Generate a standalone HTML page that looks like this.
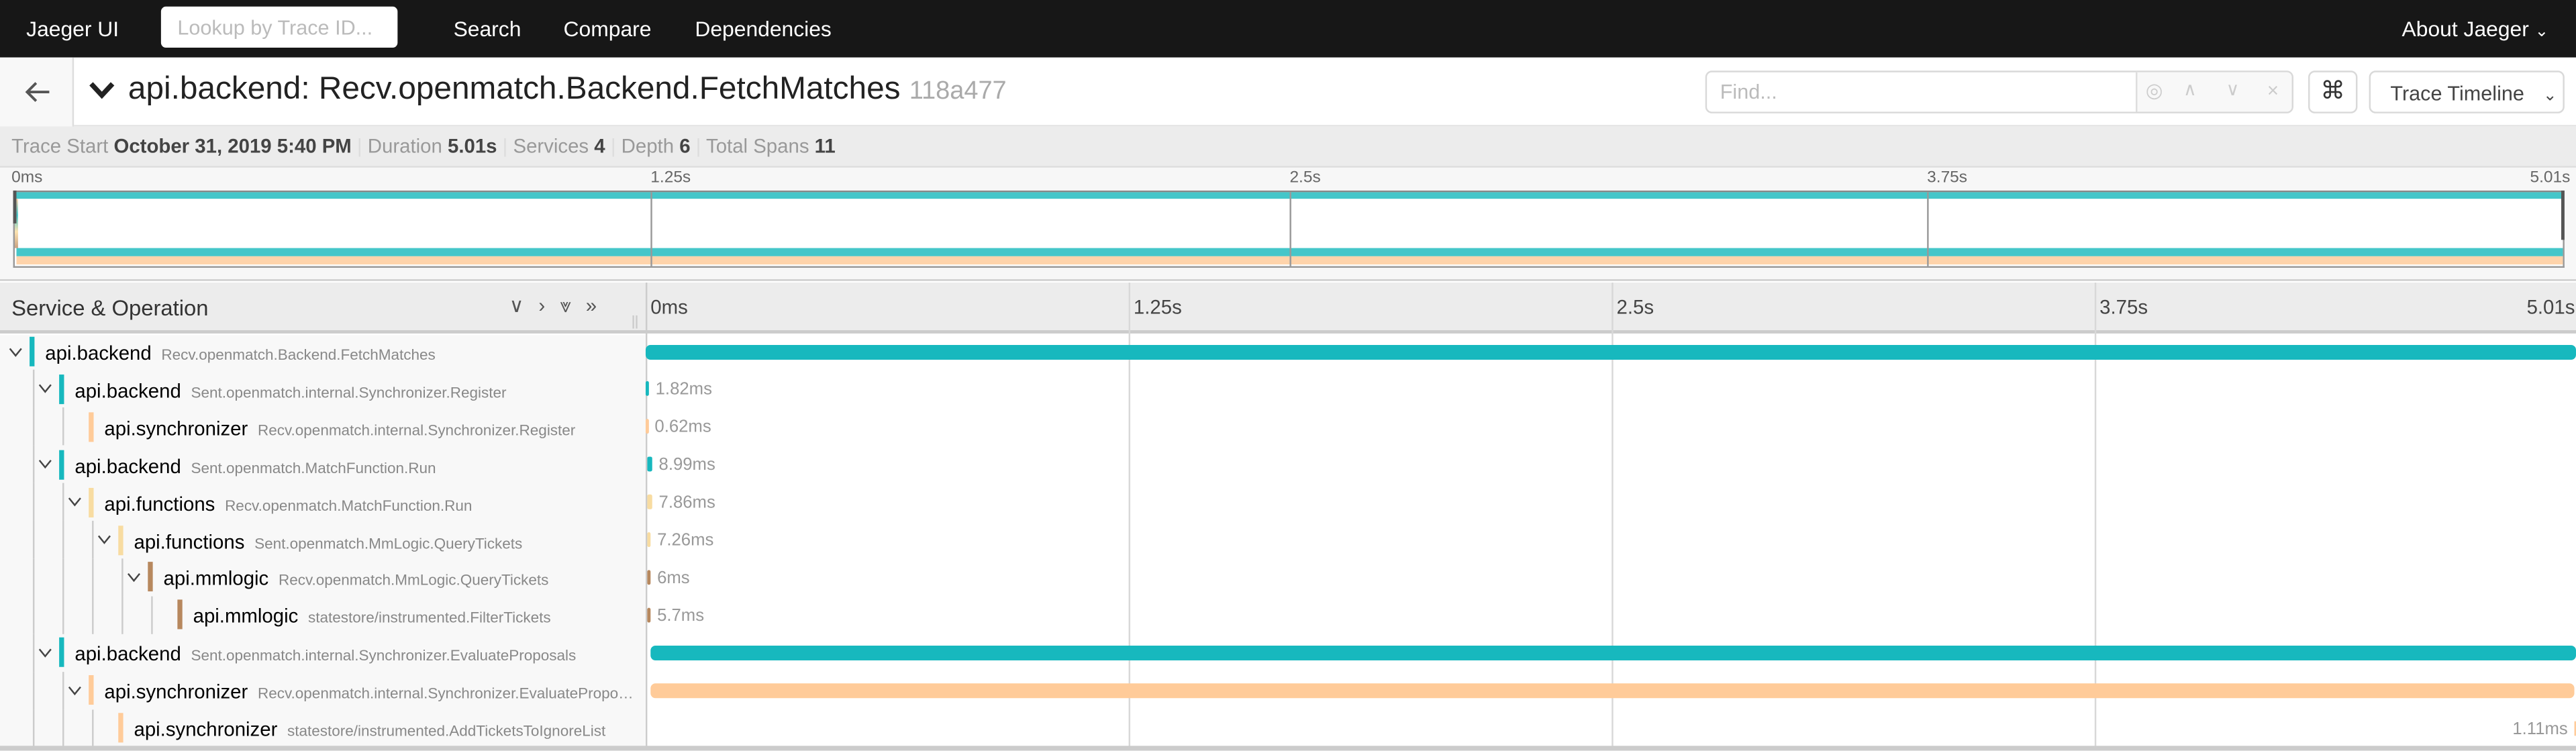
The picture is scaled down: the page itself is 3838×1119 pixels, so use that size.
<!DOCTYPE html>
<html><head><meta charset="utf-8"><style>
*{box-sizing:border-box;margin:0;padding:0}
html,body{width:3838px;height:1118px;overflow:hidden;background:#fff}
#r{position:absolute;left:0;top:0;width:1568px;height:457px;transform:scale(2.44770);transform-origin:0 0;font-family:"Liberation Sans",Arial,sans-serif;overflow:hidden}
.a{position:absolute}
.nav{left:0;top:0;width:1568px;height:35px;background:#171717;color:#fff;font-size:13px}
.nav span{position:absolute;top:10px}
.row .svc{font-size:12px;color:#000}
.row .op{font-size:9.2px;color:#888;margin-left:6px}
.gl{position:absolute;top:0;width:1px;height:23px;background:#ccc}
.lab{font-size:10.5px;color:#999}
</style></head><body><div id="r">
<div class="a nav">
<span style="left:16px">Jaeger UI</span>
<div class="a" style="left:98px;top:4px;width:144px;height:25px;background:#fff;border-radius:3px;color:#bbb;font-size:12.5px;padding:6px 10px;white-space:nowrap">Lookup by Trace ID...</div>
<span style="left:276px">Search</span><span style="left:343px">Compare</span><span style="left:423px">Dependencies</span>
<span style="left:1462px">About Jaeger <span style="position:static;font-size:10px">&#8964;</span></span>
</div>
<!-- header -->
<div class="a" style="left:0;top:35px;width:1568px;height:42px;background:#fff;border-bottom:1px solid #e6e6e6"></div>
<div class="a" style="left:0;top:35px;width:45px;height:42px;background:#f8f8f8;border-right:1px solid #ddd"></div>
<svg class="a" style="left:14px;top:48px" width="18" height="16" viewBox="0 0 18 16"><path d="M16 8H3M8 2.5L2.5 8L8 13.5" fill="none" stroke="#555" stroke-width="1.6"/></svg>
<svg class="a" style="left:54px;top:49px" width="16" height="12" viewBox="0 0 16 12"><path d="M1.5 2L8 9L14.5 2" fill="none" stroke="#222" stroke-width="3"/></svg>
<div class="a" style="left:78px;top:43px;font-size:19.5px;color:#222;white-space:nowrap">api.backend: Recv.openmatch.Backend.FetchMatches <span style="font-size:15.5px;color:#aaa">118a477</span></div>
<div class="a" style="left:1038px;top:43px;width:358px;height:26px;border:1px solid #d9d9d9;border-radius:4px;background:#fff"></div>
<div class="a" style="left:1300px;top:44px;width:95px;height:24px;background:#f8f8f8;border-left:1px solid #ddd;border-radius:0 3px 3px 0"></div>
<div class="a" style="left:1047px;top:49px;font-size:12.5px;color:#bbb">Find...</div>
<div class="a" style="left:1306px;top:48px;font-size:12px;color:#ccc">&#9678;</div>
<div class="a" style="left:1329px;top:48px;font-size:11px;color:#ccc">&#8743;</div>
<div class="a" style="left:1355px;top:48px;font-size:11px;color:#ccc">&#8744;</div>
<div class="a" style="left:1380px;top:48px;font-size:12px;color:#ccc">&#215;</div>
<div class="a" style="left:1405px;top:43px;width:30px;height:26px;border:1px solid #d9d9d9;border-radius:4px;text-align:center;font-size:15px;line-height:24px;color:#333">&#8984;</div>
<div class="a" style="left:1442px;top:43px;width:119px;height:26px;border:1px solid #d9d9d9;border-radius:4px;font-size:12.5px;color:#444;padding:6px 12px;white-space:nowrap">Trace Timeline <span style="margin-left:8px;font-size:10px">&#8964;</span></div>
<!-- summary -->
<div class="a" style="left:0;top:77px;width:1568px;height:24px;background:#ececec;font-size:12px;color:#999;padding:5px 7px;white-space:nowrap">Trace Start <b style="color:#444">October 31, 2019 5:40 PM</b><span style="color:#ddd"> | </span>Duration <b style="color:#444">5.01s</b><span style="color:#ddd"> | </span>Services <b style="color:#444">4</b><span style="color:#ddd"> | </span>Depth <b style="color:#444">6</b><span style="color:#ddd"> | </span>Total Spans <b style="color:#444">11</b></div>
<!-- minimap -->
<div class="a" style="left:0;top:101px;width:1568px;height:70px;background:#f7f7f7;border-bottom:1px solid #ccc;border-top:1px solid #ddd"></div>
<div class="a lab" style="left:7px;top:103px;color:#666;font-size:10px">0ms</div>
<div class="a lab" style="left:396px;top:103px;color:#666;font-size:10px">1.25s</div>
<div class="a lab" style="left:785px;top:103px;color:#666;font-size:10px">2.5s</div>
<div class="a lab" style="left:1173px;top:103px;color:#666;font-size:10px">3.75s</div>
<div class="a lab" style="left:1540px;top:103px;color:#666;font-size:10px">5.01s</div>
<div class="a" style="left:8px;top:116px;width:1553px;height:47px;background:#fff;border-bottom:1.5px solid #999;border-left:1px solid #999;border-right:1px solid #999;border-top:1px solid #888"></div>
<div class="a" style="left:10px;top:117px;width:1550px;height:4px;background:#45c6c9"></div>
<div class="a" style="left:10px;top:151px;width:1550px;height:5px;background:#45c6c9"></div>
<div class="a" style="left:10px;top:156px;width:1550px;height:5px;background:#ffd4ab"></div>
<div class="a" style="left:9px;top:121px;width:2px;height:30px;background:linear-gradient(#ffd4ab,#45c6c9,#fde3b0,#c9a080)"></div>
<div class="a" style="left:8px;top:116px;width:2px;height:20px;background:#555"></div>
<div class="a" style="left:1559px;top:116px;width:2px;height:30px;background:#555"></div>
<div class="a" style="left:396px;top:117px;width:1px;height:45px;background:#999"></div>
<div class="a" style="left:785px;top:117px;width:1px;height:45px;background:#999"></div>
<div class="a" style="left:1173px;top:117px;width:1px;height:45px;background:#999"></div>
<!-- table header -->
<div class="a" style="left:0;top:172px;width:1568px;height:31px;background:#ececec;border-bottom:2px solid #ccc"></div>
<div class="a" style="left:7px;top:180px;font-size:13.4px;color:#333">Service &amp; Operation</div>
<div class="a" style="left:310px;top:179px;font-size:12px;color:#555;letter-spacing:9px;white-space:nowrap">&#8744;&#8250;&#10836;&#187;</div>
<div class="a" style="left:385px;top:192px;width:3px;height:8px;border-left:1px solid #ccc;border-right:1px solid #ccc"></div>
<div class="a" style="left:393px;top:172px;width:1px;height:285px;background:#ccc"></div>
<div class="a" style="left:396px;top:180px;font-size:12px;color:#444">0ms</div>
<div class="a" style="left:690px;top:180px;font-size:12px;color:#444">1.25s</div>
<div class="a" style="left:984px;top:180px;font-size:12px;color:#444">2.5s</div>
<div class="a" style="left:1278px;top:180px;font-size:12px;color:#444">3.75s</div>
<div class="a" style="left:1538px;top:180px;font-size:12px;color:#444">5.01s</div>
<div class="a" style="left:687px;top:172px;width:1px;height:285px;background:#d8d8d8"></div>
<div class="a" style="left:981px;top:172px;width:1px;height:285px;background:#d8d8d8"></div>
<div class="a" style="left:1275px;top:172px;width:1px;height:285px;background:#d8d8d8"></div>
<div class="a" style="left:0;top:204px;width:393px;height:253px;background:#f8f8f8"></div>
<div id="rows"></div>
<div class="a" style="left:0;top:454px;width:1568px;height:3px;background:#ccc"></div>
</div>
<script>
var T='#17b8be',P='#ffcb99',Y='#f8dca1',B='#b7885e';
var rows=[
[0,1,T,'api.backend','Recv.openmatch.Backend.FetchMatches',[393,1175],null],
[1,1,T,'api.backend','Sent.openmatch.internal.Synchronizer.Register',[393,2],'1.82ms'],
[2,0,P,'api.synchronizer','Recv.openmatch.internal.Synchronizer.Register',[393,1.5],'0.62ms'],
[1,1,T,'api.backend','Sent.openmatch.MatchFunction.Run',[394,3],'8.99ms'],
[2,1,Y,'api.functions','Recv.openmatch.MatchFunction.Run',[394,3],'7.86ms'],
[3,1,Y,'api.functions','Sent.openmatch.MmLogic.QueryTickets',[394,2],'7.26ms'],
[4,1,B,'api.mmlogic','Recv.openmatch.MmLogic.QueryTickets',[394,2],'6ms'],
[5,0,B,'api.mmlogic','statestore/instrumented.FilterTickets',[394,2],'5.7ms'],
[1,1,T,'api.backend','Sent.openmatch.internal.Synchronizer.EvaluateProposals',[396,1172],null],
[2,1,P,'api.synchronizer','Recv.openmatch.internal.Synchronizer.EvaluatePropo\u2026',[396,1171],null],
[3,0,P,'api.synchronizer','statestore/instrumented.AddTicketsToIgnoreList',[1567,1],'R1.11ms']];
var h='';
rows.forEach(function(r,i){
 var y=202.5+i*22.9,L=r[0];
 h+='<div class="a row" style="left:0;top:'+y+'px;width:1568px;height:23px">';
 for(var k=0;k<L;k++)h+='<div class="gl" style="left:'+(19.5+18*k)+'px"></div>';
 if(r[1])h+='<svg class="a" style="left:'+(5+18*L)+'px;top:8px" width="9" height="7" viewBox="0 0 9 7"><path d="M1 1.2L4.5 5.5L8 1.2" fill="none" stroke="#444" stroke-width="1"/></svg>';
 h+='<div class="a" style="left:'+(18+18*L)+'px;top:2.5px;width:3px;height:18px;background:'+r[2]+'"></div>';
 h+='<div class="a" style="left:'+(27.5+18*L)+'px;top:3.5px;white-space:nowrap"><span class="svc">'+r[3]+'</span><span class="op">'+r[4]+'</span></div>';
 var b=r[5];
 h+='<div class="a" style="left:'+b[0]+'px;top:7px;width:'+b[1]+'px;height:9px;border-radius:'+(b[1]>10?3:1)+'px;background:'+r[2]+'"></div>';
 if(r[6]){ if(r[6][0]=='R')h+='<div class="a lab" style="right:5px;top:6px">'+r[6].slice(1)+'</div>';
  else h+='<div class="a lab" style="left:'+(b[0]+b[1]+4)+'px;top:6px">'+r[6]+'</div>';}
 h+='</div>';
});
document.getElementById('rows').innerHTML=h;
</script>
</body></html>
